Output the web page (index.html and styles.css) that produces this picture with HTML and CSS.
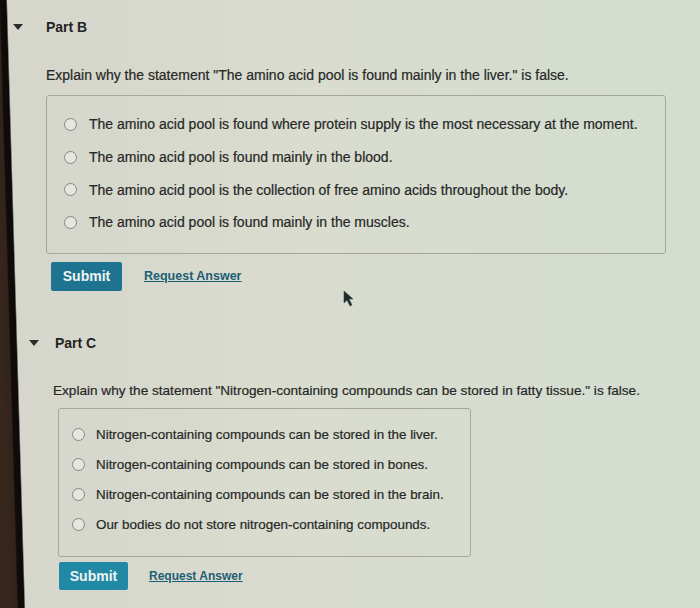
FILE: index.html
```html
<!DOCTYPE html>
<html>
<head>
<link rel="stylesheet" href="styles.css">
</head>
<body>

<div class="screen">

 <div class="part part-b">
  <div class="part-head"><span class="caret"></span><h2>Part B</h2></div>
  <p class="prompt">Explain why the statement "The amino acid pool is found mainly in the liver." is false.</p>
  <div class="choices">
   <label class="choice"><span class="radio"></span>The amino acid pool is found where protein supply is the most necessary at the moment.</label>
   <label class="choice"><span class="radio"></span>The amino acid pool is found mainly in the blood.</label>
   <label class="choice"><span class="radio"></span>The amino acid pool is the collection of free amino acids throughout the body.</label>
   <label class="choice"><span class="radio"></span>The amino acid pool is found mainly in the muscles.</label>
  </div>
  <div class="actions">
   <button class="submit" type="button">Submit</button>
   <a class="request" href="#">Request Answer</a>
  </div>
 </div>

 <div class="part part-c">
  <div class="part-head"><span class="caret"></span><h2>Part C</h2></div>
  <p class="prompt">Explain why the statement "Nitrogen-containing compounds can be stored in fatty tissue." is false.</p>
  <div class="choices">
   <label class="choice"><span class="radio"></span>Nitrogen-containing compounds can be stored in the liver.</label>
   <label class="choice"><span class="radio"></span>Nitrogen-containing compounds can be stored in bones.</label>
   <label class="choice"><span class="radio"></span>Nitrogen-containing compounds can be stored in the brain.</label>
   <label class="choice"><span class="radio"></span>Our bodies do not store nitrogen-containing compounds.</label>
  </div>
  <div class="actions">
   <button class="submit" type="button">Submit</button>
   <a class="request" href="#">Request Answer</a>
  </div>
 </div>

 <!-- mouse pointer -->
 <svg class="pointer" width="12" height="18" viewBox="0 0 12 18">
  <path d="M1 1 L1 13 L4 10 L7 16 L9 15 L6 9 L10 9 Z" fill="#1e2a2c" stroke="#3a4a4c" stroke-width="0.6"/>
 </svg>

</div>

</body>
</html>
```

FILE: styles.css
```css
body {
    margin: 0;
    font-family: "Liberation Sans", Arial, sans-serif;
    color: #262826;
}

/* monitor edge on the left, then the page */
.screen {
    position: relative;
    min-height: 608px;
    overflow: hidden;
    background:
        linear-gradient(88.3deg, #3a281d 0, #33241b 17px, #100c0a 18.5px, #0d0a09 24px, rgba(13,10,9,0) 25.5px),
        linear-gradient(to right, #d6d6cc 0, #d9dccf 45%, #d3ded0 100%);
}

.part-head {
    display: flex;
    align-items: center;
    height: 20px;
}

.part-head h2 {
    margin: 0;
    font-size: 14px;
    font-weight: bold;
    color: #242424;
}

.caret {
    width: 0;
    height: 0;
    border-left: 5px solid transparent;
    border-right: 5px solid transparent;
    border-top: 6px solid #2c2c2c;
}

.prompt {
    margin: 28px 0 0;
    line-height: 20px;
    font-size: 14px;
    -webkit-text-stroke: 0.2px #262826;
}

.choices {
    width: fit-content;
    border: 1px solid #a4a69f;
    border-radius: 3px;
    padding-right: 27px;
}

.choice {
    display: flex;
    align-items: center;
    font-size: 14px;
    -webkit-text-stroke: 0.2px #262826;
}

.radio {
    width: 11px;
    height: 11px;
    border: 1.5px solid #858782;
    border-radius: 50%;
    background: #e4e6df;
}

.actions {
    display: flex;
    align-items: center;
}

.submit {
    background-color: #1e7391;
    color: #eef4f4;
    border: none;
    border-radius: 2px;
    font-family: inherit;
    font-size: 14px;
    font-weight: bold;
    padding: 0;
}

.request {
    color: #1e5f77;
    font-size: 12.5px;
    font-weight: bold;
    text-decoration: underline;
    margin-left: 22px;
}

/* Part B */
.part-b {
    padding: 17px 0 0 46px;
}

.part-b .caret {
    margin-left: -33px;
    margin-right: 23px;
}

.part-b .prompt {
    margin-bottom: 10px;
}

.part-b .choices {
    padding-top: 12px;
    padding-bottom: 14px;
    padding-left: 17px;
}

.part-b .choice {
    height: 32.7px;
}

.part-b .radio {
    margin-right: 12px;
}

.part-b .actions {
    margin: 8px 0 0 5px;
}

.part-b .submit {
    width: 71px;
    height: 29px;
}

/* Part C sits a little further right */
.part-c {
    padding: 42px 0 0 53px;
}

.part-c .caret {
    margin-left: -24px;
    margin-right: 16px;
}

.part-c .prompt {
    font-size: 13.6px;
}

.part-c .choice {
    font-size: 13.4px;
}

.part-c .prompt {
    margin-bottom: 7px;
}

.part-c .choices {
    margin-left: 5px;
    padding-top: 11px;
    padding-bottom: 16px;
    padding-left: 13px;
    padding-right: 26px;
}

.part-c .choice {
    height: 30px;
}

.part-c .radio {
    margin-right: 11px;
}

.part-c .actions {
    margin: 5px 0 0 6px;
}

.part-c .submit {
    width: 69px;
    height: 28px;
    background-color: #2189a3;
}

.part-c .request {
    font-size: 12px;
    margin-left: 21px;
}

.pointer {
    position: absolute;
    left: 343px;
    top: 290px;
}
```
